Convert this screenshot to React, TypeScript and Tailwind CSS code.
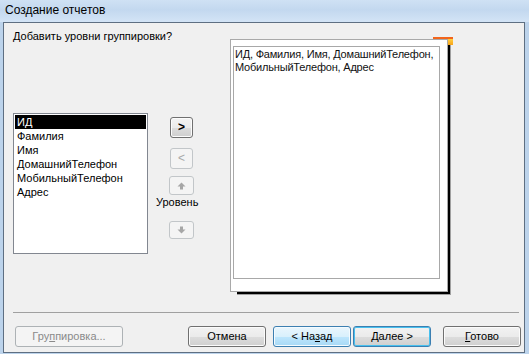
import React from "react";

const font = { fontFamily: '"Liberation Sans", Arial, sans-serif' };

const fields = ["ИД", "Фамилия", "Имя", "ДомашнийТелефон", "МобильныйТелефон", "Адрес"];

const Arrow = ({ down }: { down?: boolean }) => (
  <svg width="9" height="8" viewBox="0 0 9 8" className={down ? "rotate-180" : ""}>
    <path d="M4.5 0.5 L8.5 4.5 L6 4.5 L6 7.5 L3 7.5 L3 4.5 L0.5 4.5 Z" fill="#a6a6a6" />
  </svg>
);

const SmallButton = ({
  children,
  disabled,
  className,
}: {
  children: React.ReactNode;
  disabled?: boolean;
  className?: string;
}) => (
  <div
    className={`flex items-center justify-center rounded-[3px] border ${
      disabled
        ? "border-[#c2c6c9] bg-[#f4f4f4] text-[#a8a8a8]"
        : "border-[#707070] bg-[linear-gradient(#f3f3f3_0%,#ebebeb_50%,#dddddd_50%,#cfcfcf_100%)] text-black shadow-[inset_0_0_0_1px_#fcfcfc]"
    } ${className ?? ""}`}
  >
    {children}
  </div>
);

type Variant = "normal" | "disabled" | "hover" | "default";

const WizardButton = ({
  variant,
  className,
  children,
}: {
  variant: Variant;
  className?: string;
  children: React.ReactNode;
}) => {
  const styles: Record<Variant, string> = {
    normal:
      "border-[#707070] bg-[linear-gradient(#f2f2f2_0%,#ebebeb_50%,#dddddd_50%,#cfcfcf_100%)] shadow-[inset_0_0_0_1px_#fbfbfb] text-black",
    disabled: "border-[#adb2b5] bg-[#f4f4f4] text-[#8a8a8a]",
    hover:
      "border-[#3c7fb1] bg-[linear-gradient(#eaf6fd_0%,#d9f0fc_50%,#bee6fd_50%,#a7d9f5_100%)] shadow-[inset_0_0_0_1px_#f4fbff] text-black",
    default:
      "border-[#3c7fb1] bg-[linear-gradient(#f2f2f2_0%,#ebebeb_50%,#dddddd_50%,#cfcfcf_100%)] shadow-[inset_0_0_0_1px_#48c0ee] text-black",
  };
  return (
    <div
      className={`flex h-[21px] items-center justify-center rounded-[3px] border text-[11px] leading-[13px] ${styles[variant]} ${className ?? ""}`}
    >
      {children}
    </div>
  );
};

export default function App() {
  return (
    <div className="flex h-[354px] w-[529px] flex-col overflow-hidden bg-[#bcd3eb]" style={font}>
      {/* Title bar */}
      <div className="h-[22px] shrink-0 bg-[linear-gradient(180deg,#cfe1f4_0%,#c3d8ef_45%,#d3e4f6_100%)] pl-[5px] pt-[3px] text-[12px] leading-[14px] text-black">
        Создание отчетов
      </div>

      {/* Dialog body */}
      <div className="ml-[3px] flex h-[331px] w-[522px] flex-col border border-[#5e6f82] bg-[#f0f0f0] text-[11px] leading-[13px] text-black">
        <div className="flex h-[289px] shrink-0">
          {/* Left: question + field list + buttons */}
          <div className="w-[226px] shrink-0 pl-[9px]">
            <div className="mt-[7px] h-[13px] whitespace-nowrap">Добавить уровни группировки?</div>
            <div className="mt-[70px] flex">
              <div className="h-[141px] w-[135px] shrink-0 border border-[#828790] bg-white p-px">
                {fields.map((f, i) => (
                  <div
                    key={f}
                    className={`h-[14px] pl-[2px] leading-[14px] ${i === 0 ? "bg-black text-white" : ""}`}
                  >
                    {f}
                  </div>
                ))}
              </div>
              <div className="ml-[8px] flex w-[42px] shrink-0 flex-col">
                <SmallButton className="ml-[14px] mt-[4px] h-[21px] w-[23px] text-[12px] font-bold">&gt;</SmallButton>
                <SmallButton disabled className="ml-[14px] mt-[10px] h-[21px] w-[23px] text-[12px]">
                  &lt;
                </SmallButton>
                <SmallButton disabled className="ml-[13px] mt-[7px] h-[19px] w-[25px]">
                  <Arrow />
                </SmallButton>
                <div className="mt-[1px] h-[13px] whitespace-nowrap">Уровень</div>
                <SmallButton disabled className="ml-[13px] mt-[12px] h-[18px] w-[25px]">
                  <Arrow down />
                </SmallButton>
              </div>
            </div>
          </div>

          {/* Right: report preview */}
          <div className="relative mt-[16px] h-[253px] w-[218px] shrink-0">
            <div className="absolute left-[7px] top-[6px] h-[250px] w-[214px] border-b border-r border-[#a0a0a0] bg-black" />
            <div className="absolute -top-[2px] right-[-5px] h-[2px] w-[20px] bg-[#f2651c]" />
            <div className="absolute right-[-5px] top-0 h-[6px] w-[5px] bg-[linear-gradient(#ffd040,#f7a21a)]" />
            <div className="relative h-[253px] w-[218px] border border-[#a9a9a9] bg-white pl-[2px] pt-[6px]">
              <div className="h-[233px] w-[207px] overflow-hidden whitespace-nowrap border border-[#a8a8a8] pl-px pt-px tracking-[-0.2px] text-[#111]">
                ИД, Фамилия, Имя, ДомашнийТелефон,
                <br />
                МобильныйТелефон, Адрес
              </div>
            </div>
          </div>
        </div>

        {/* Separator */}
        <div className="ml-[9px] h-px w-[506px] bg-[#a0a0a0]" />

        {/* Bottom buttons */}
        <div className="mt-[13px] flex">
          <WizardButton variant="disabled" className="ml-[11px] w-[108px]">
            <span>
              Гру<span className="underline">п</span>пировка...
            </span>
          </WizardButton>
          <WizardButton variant="normal" className="ml-[65px] w-[78px]">
            Отмена
          </WizardButton>
          <WizardButton variant="hover" className="ml-[7px] w-[78px]">
            <span>
              &lt; На<span className="underline">з</span>ад
            </span>
          </WizardButton>
          <WizardButton variant="default" className="ml-[2px] w-[78px]">
            <span>
              <span className="underline">Д</span>алее &gt;
            </span>
          </WizardButton>
          <WizardButton variant="normal" className="ml-[12px] w-[78px]">
            <span>
              <span className="underline">Г</span>отово
            </span>
          </WizardButton>
        </div>
      </div>
    </div>
  );
}
